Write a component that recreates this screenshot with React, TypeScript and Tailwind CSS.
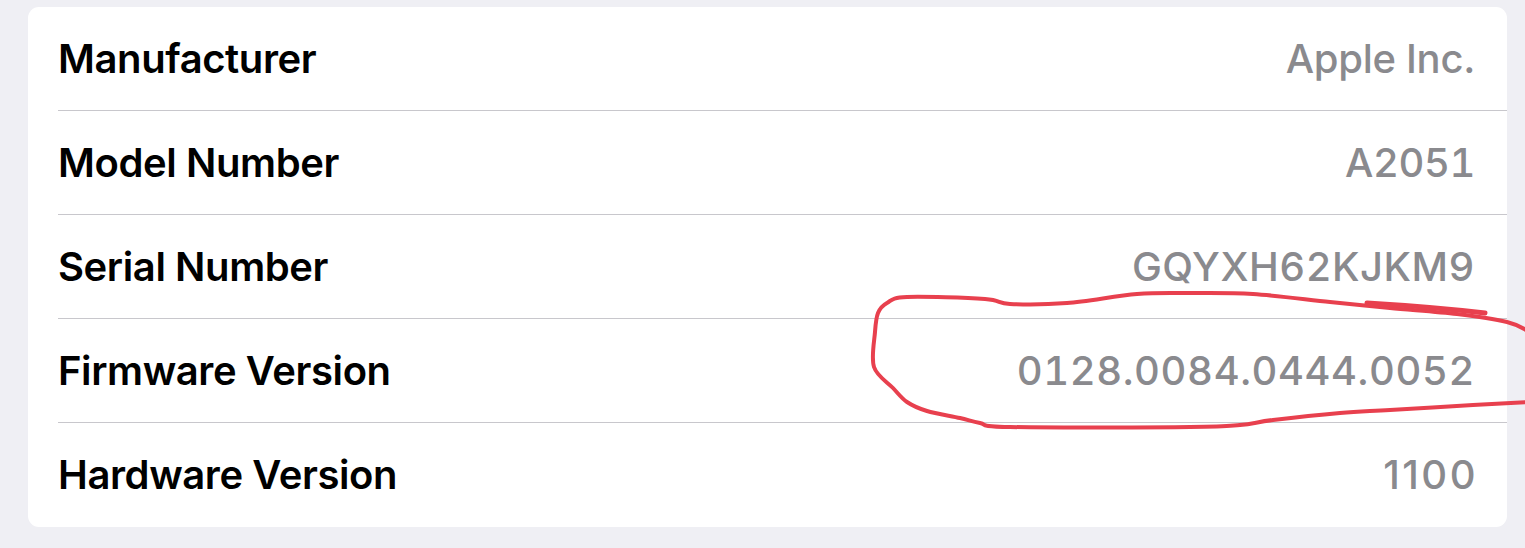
const ROWS = [
  { label: 'Manufacturer', value: 'Apple Inc.', cls: 'tracking-[-0.3px]' },
  { label: 'Model Number', value: 'A2051', cls: 'tabular-nums tracking-[-0.4px]' },
  { label: 'Serial Number', value: 'GQYXH62KJKM9', cls: 'tabular-nums tracking-[0.5px]' },
  { label: 'Firmware Version', value: '0128.0084.0444.0052', cls: 'tabular-nums tracking-[0.6px]' },
  { label: 'Hardware Version', value: '1100', cls: 'tracking-[2.5px] -mr-[3px]' },
]

// hand-drawn marker ring round the firmware value
const RING: [number, number][] = [
  [1528, 331], [1507, 322], [1457, 314], [1390, 308], [1330, 302], [1253, 294], [1190, 293],
  [1137, 294], [1067, 303], [1010, 304], [985, 299], [907, 297], [887, 303], [878, 313],
  [875, 332], [874, 367], [893, 388], [907, 402], [927, 411], [960, 418], [980, 423],
  [1010, 427], [1190, 427], [1240, 425], [1273, 420], [1340, 413], [1390, 410], [1473, 405], [1528, 402],
]

function smooth(pts: [number, number][]) {
  let d = `M${pts[0][0]},${pts[0][1]}`
  for (let i = 0; i < pts.length - 1; i++) {
    const p0 = pts[i - 1] ?? pts[i]
    const p1 = pts[i]
    const p2 = pts[i + 1]
    const p3 = pts[i + 2] ?? p2
    const c1x = p1[0] + (p2[0] - p0[0]) / 6
    const c1y = p1[1] + (p2[1] - p0[1]) / 6
    const c2x = p2[0] - (p3[0] - p1[0]) / 6
    const c2y = p2[1] - (p3[1] - p1[1]) / 6
    d += ` C${c1x},${c1y} ${c2x},${c2y} ${p2[0]},${p2[1]}`
  }
  return d
}

export default function App() {
  return (
    <div className="relative w-[1525px] h-[548px] overflow-hidden bg-[#efeff4] pt-[7px] pl-[28px] font-['Inter','Liberation_Sans',sans-serif]">
      <div className="w-[1479px] bg-white rounded-[11px] overflow-hidden">
        {ROWS.map((row, i) => (
          <div key={row.label} className="pl-[30px]">
            <div
              className={
                i < ROWS.length - 1
                  ? 'flex items-center justify-between h-[104px] pr-[32px] border-b border-[#c8c7cc]'
                  : 'flex items-center justify-between h-[104px] pr-[32px]'
              }
            >
              <span className="text-[40px] font-semibold text-black tracking-[-0.4px]">{row.label}</span>
              <span className={'text-[40px] font-medium text-[#8a8a8e] ' + row.cls}>{row.value}</span>
            </div>
          </div>
        ))}
      </div>

      <svg className="absolute inset-0 pointer-events-none" width="1525" height="548" viewBox="0 0 1525 548">
        <path d={smooth(RING)} fill="none" stroke="#e8404e" strokeWidth="4" strokeLinejoin="round" strokeLinecap="round" />
        <path d="M1367,303 C1400,305 1450,309 1485,313" fill="none" stroke="#e8404e" strokeWidth="5" strokeLinecap="round" />
      </svg>
    </div>
  )
}
